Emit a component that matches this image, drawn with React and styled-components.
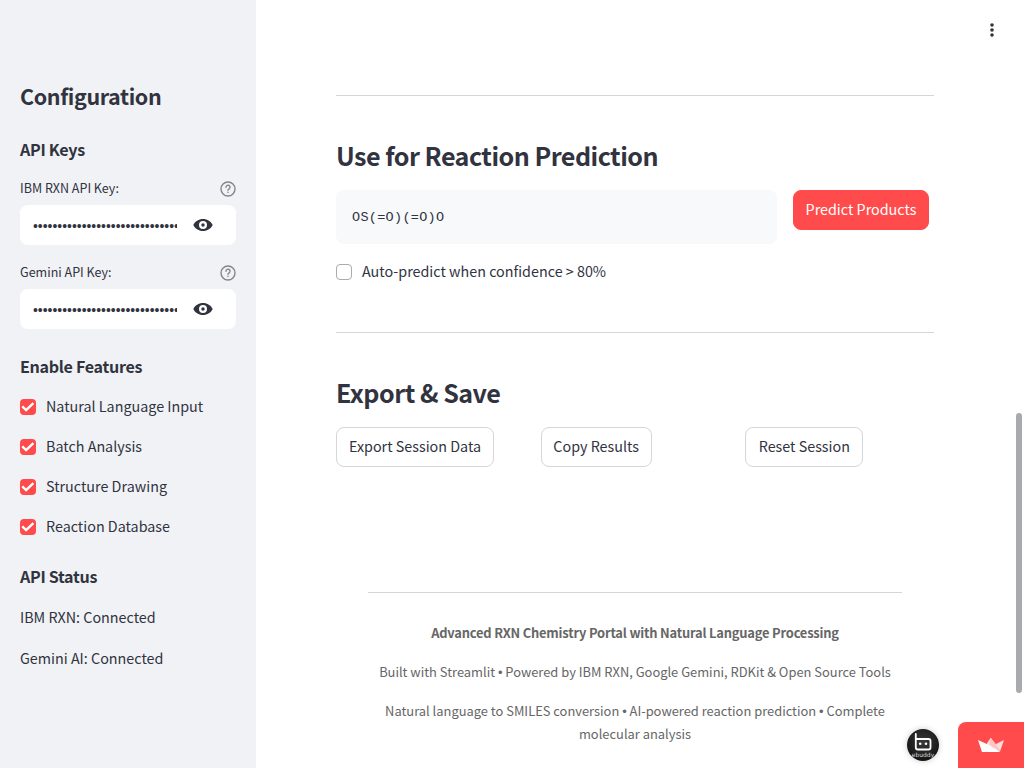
import React from "react";
import styled, { createGlobalStyle } from "styled-components";

const Global = createGlobalStyle`
  * { box-sizing: border-box; }
  body {
    margin: 0;
    background: #fff;
    color: #31333f;
    font-family: "Noto Sans CJK SC", "Noto Sans", sans-serif;
    font-size: 14.33px;
    overflow: hidden;
  }
  h1, h2, h3, p { margin: 0; }
`;

const Page = styled.div`
  display: flex;
  height: 768px;
  width: 1024px;
  position: relative;
  overflow: hidden;
`;

const Sidebar = styled.aside`
  width: 256px;
  height: 768px;
  padding: 76px 20px 0;
  background: #f0f2f6;
`;

const SideTitle = styled.h1`
  font-size: 21.5px;
  line-height: 40px;
  font-weight: 600;
  letter-spacing: -0.38px;
`;

const SideHeading = styled.h3`
  font-size: 16.1px;
  line-height: 24px;
  font-weight: 600;
  letter-spacing: -0.31px;
  margin-top: ${(p) => p.$top}px;
`;

const Field = styled.div`
  margin-top: ${(p) => p.$top}px;
`;

const FieldLabel = styled.div`
  display: flex;
  align-items: center;
  justify-content: space-between;
  height: 22px;
  font-size: 12.54px;
  line-height: 20px;
  margin-bottom: 5px;

  span { padding-bottom: 2px; }
`;

const KeyInput = styled.div`
  display: flex;
  align-items: center;
  height: 40px;
  padding-left: 13px;
  border-radius: 8px;
  background: #fff;
`;

const Dots = styled.span`
  width: 144px;
  overflow: hidden;
  white-space: nowrap;
  font-family: "Liberation Sans", sans-serif;
  font-size: 13.9px;
  line-height: 20px;
  padding-top: 1px;
  margin-right: 16px;
`;

const CheckList = styled.div`
  display: flex;
  flex-direction: column;
  gap: 16px;
  margin-top: 17px;
`;

const CheckRow = styled.label`
  display: flex;
  align-items: center;
  gap: 10px;
  height: 24px;
  line-height: 22px;
`;

const CheckText = styled.span`
  padding-bottom: 2px;
`;

const Box = styled.span`
  display: flex;
  width: 16px;
  height: 16px;
  border-radius: 4px;
  background: ${(p) => (p.$on ? "#ff4b4b" : "#fff")};
  border: ${(p) => (p.$on ? "none" : "1px solid #a9abb1")};
`;

const Status = styled.p`
  line-height: 25px;
  margin-top: ${(p) => p.$top}px;
`;

const Main = styled.main`
  width: 758px;
  padding: 95px 80px 0;
`;

const Rule = styled.div`
  height: 1px;
  background: #d6d6d9;
`;

const Heading = styled.h2`
  font-size: 25.08px;
  line-height: 34px;
  font-weight: 600;
  letter-spacing: -0.5px;
  margin: 42px 0 18px;
`;

const Columns = styled.div`
  display: grid;
  grid-template-columns: ${(p) => p.$cols};
  column-gap: 16px;
  align-items: start;
`;

const Code = styled.div`
  height: 54px;
  padding: 1px 16px 0;
  border-radius: 8px;
  background: #f8f9fb;
  font-family: "Liberation Mono", monospace;
  font-size: 13.5px;
  letter-spacing: 0.3px;
  line-height: 54px;
`;

const Button = styled.button`
  justify-self: start;
  width: ${(p) => p.$w}px;
  height: 40px;
  padding: 0 0 2px;
  border-radius: 8px;
  border: 1px solid ${(p) => (p.$primary ? "#ff4b4b" : "#d6d6d9")};
  background: ${(p) => (p.$primary ? "#ff4b4b" : "#fff")};
  color: ${(p) => (p.$primary ? "#fff" : "#31333f")};
  font: inherit;
  line-height: 24px;
  white-space: nowrap;
`;

const AutoPredict = styled.div`
  margin: 16px 0 48px;
`;

const Footer = styled.footer`
  margin: 125px 32px 0;
  text-align: center;
  color: #666;
  font-size: 12.9px;
  line-height: 23px;

  p { margin-bottom: 16px; }
`;

const FooterTitle = styled.p`
  margin-top: 28px;
  font-weight: 600;
  letter-spacing: -0.19px;
`;

const Bullet = styled.span`
  font-family: "Liberation Sans", sans-serif;
  line-height: 1;
`;

const MenuButton = styled.div`
  position: absolute;
  left: 980px;
  top: 18px;
  width: 24px;
  height: 24px;
`;

const ScrollThumb = styled.div`
  position: absolute;
  left: 1016px;
  top: 413px;
  width: 6px;
  height: 280px;
  border-radius: 3px;
  background: #a9aaaf;
`;

const Avatar = styled.div`
  position: absolute;
  left: 907px;
  top: 729px;
  width: 32px;
  height: 32px;
  border-radius: 50%;
  overflow: hidden;
  background: radial-gradient(circle at 50% 40%, #3a3a3a, #151515 75%);
  box-shadow: 0 0 6px rgba(0, 0, 0, 0.2);
`;

const HostBadge = styled.div`
  position: absolute;
  left: 958px;
  top: 722px;
  width: 66px;
  height: 46px;
  border-radius: 8px 0 0 0;
  background: #ff4b4b;
`;

const HelpIcon = () => (
  <svg width="16" height="16" viewBox="0 0 16 16" fill="none" stroke="#83858d" strokeWidth="1.4" strokeLinecap="round">
    <circle cx="8" cy="8" r="7" />
    <path d="M6 6.2a2 2 0 1 1 3.1 1.7C8.4 8.3 8 8.6 8 9.2" />
    <path d="M8 11.3v.1" />
  </svg>
);

const EyeIcon = () => (
  <svg width="20" height="20" viewBox="0 0 20 20">
    <path
      fill="#31333f"
      fillRule="evenodd"
      d="M10 4C5.6 4 2 6.4.3 10 2 13.6 5.6 16 10 16s8-2.4 9.700-6C18 6.4 14.4 4 10 4Zm0 10a4 4 0 1 1 0-8 4 4 0 0 1 0 8Zm0-2.300a1.700 1.700 0 1 0 0-3.400 1.700 1.700 0 0 0 0 3.400Z"
    />
  </svg>
);

const KeyField = ({ label, top }) => (
  <Field $top={top}>
    <FieldLabel>
      <span>{label}</span>
      <HelpIcon />
    </FieldLabel>
    <KeyInput>
      <Dots>{"•".repeat(30)}</Dots>
      <EyeIcon />
    </KeyInput>
  </Field>
);

const Check = ({ on, children }) => (
  <CheckRow>
    <Box $on={on}>
      {on && (
        <svg width="16" height="16" viewBox="0 0 16 16" fill="none" stroke="#fff" strokeWidth="2.4">
          <path d="M2.3 7.4 6.1 11.1 13.4 4.2" />
        </svg>
      )}
    </Box>
    <CheckText>{children}</CheckText>
  </CheckRow>
);

const features = ["Natural Language Input", "Batch Analysis", "Structure Drawing", "Reaction Database"];

export default function App() {
  return (
    <Page>
      <Global />
      <Sidebar>
        <SideTitle>Configuration</SideTitle>
        <SideHeading $top={21}>API Keys</SideHeading>
        <KeyField label="IBM RXN API Key:" top={17} />
        <KeyField label="Gemini API Key:" top={17} />
        <SideHeading $top={25}>Enable Features</SideHeading>
        <CheckList>
          {features.map((f) => (
            <Check key={f} on>{f}</Check>
          ))}
        </CheckList>
        <SideHeading $top={25}>API Status</SideHeading>
        <Status $top={16}>IBM RXN: Connected</Status>
        <Status $top={16}>Gemini AI: Connected</Status>
      </Sidebar>

      <Main>
        <Rule />
        <Heading>Use for Reaction Prediction</Heading>
        <Columns $cols="441px 141px">
          <Code>OS(=O)(=O)O</Code>
          <Button $primary $w={136}>Predict Products</Button>
        </Columns>
        <AutoPredict>
          <Check>Auto-predict when confidence &gt; 80%</Check>
        </AutoPredict>
        <Rule />
        <Heading>Export &amp; Save</Heading>
        <Columns $cols="repeat(3, 1fr)">
          <Button $w={158}>Export Session Data</Button>
          <Button $w={111}>Copy Results</Button>
          <Button $w={118}>Reset Session</Button>
        </Columns>
        <Footer>
          <Rule />
          <FooterTitle>Advanced RXN Chemistry Portal with Natural Language Processing</FooterTitle>
          <p>
            Built with Streamlit <Bullet>•</Bullet> Powered by IBM RXN, Google Gemini, RDKit &amp; Open Source Tools
          </p>
          <p>
            Natural language to SMILES conversion <Bullet>•</Bullet> AI-powered reaction prediction{" "}
            <Bullet>•</Bullet> Complete molecular analysis
          </p>
        </Footer>
      </Main>

      <MenuButton>
        <svg width="24" height="24" viewBox="0 0 24 24" fill="#31333f">
          <circle cx="12" cy="7" r="1.8" />
          <circle cx="12" cy="12" r="1.8" />
          <circle cx="12" cy="17" r="1.8" />
        </svg>
      </MenuButton>
      <ScrollThumb />
      <Avatar>
        <svg width="32" height="32" viewBox="0 0 32 32" fill="none" stroke="#fff">
          <path strokeWidth="1.8" strokeLinecap="round" d="M8.8 5v13.500a2 2 0 0 0 2 2h10.700a2 2 0 0 0 2-2V12a2 2 0 0 0-2-2H9" />
          <circle cx="13.2" cy="14.8" r="1.3" fill="#fff" stroke="none" />
          <circle cx="19" cy="14.8" r="1.3" fill="#fff" stroke="none" />
          <text x="16" y="27.600" textAnchor="middle" fill="#ddd" stroke="none" fontFamily="DejaVu Sans" fontSize="6">ebuddy</text>
        </svg>
      </Avatar>
      <HostBadge>
        <svg width="66" height="46" viewBox="0 0 66 46">
          <path fill="#ffe3e3" d="M28 23 32.700 15.700 38 23 33 26Z" />
          <path fill="#ffc4c4" d="M32.700 15.700 38 22.500 42 29.500 31 24Z" />
          <path fill="#ffdcdc" d="M46 18 37.500 22.300 42 29.500Z" />
          <path fill="#fff" d="M20 18 32 23.500 42 29.500 41 30H24Z" />
        </svg>
      </HostBadge>
    </Page>
  );
}
